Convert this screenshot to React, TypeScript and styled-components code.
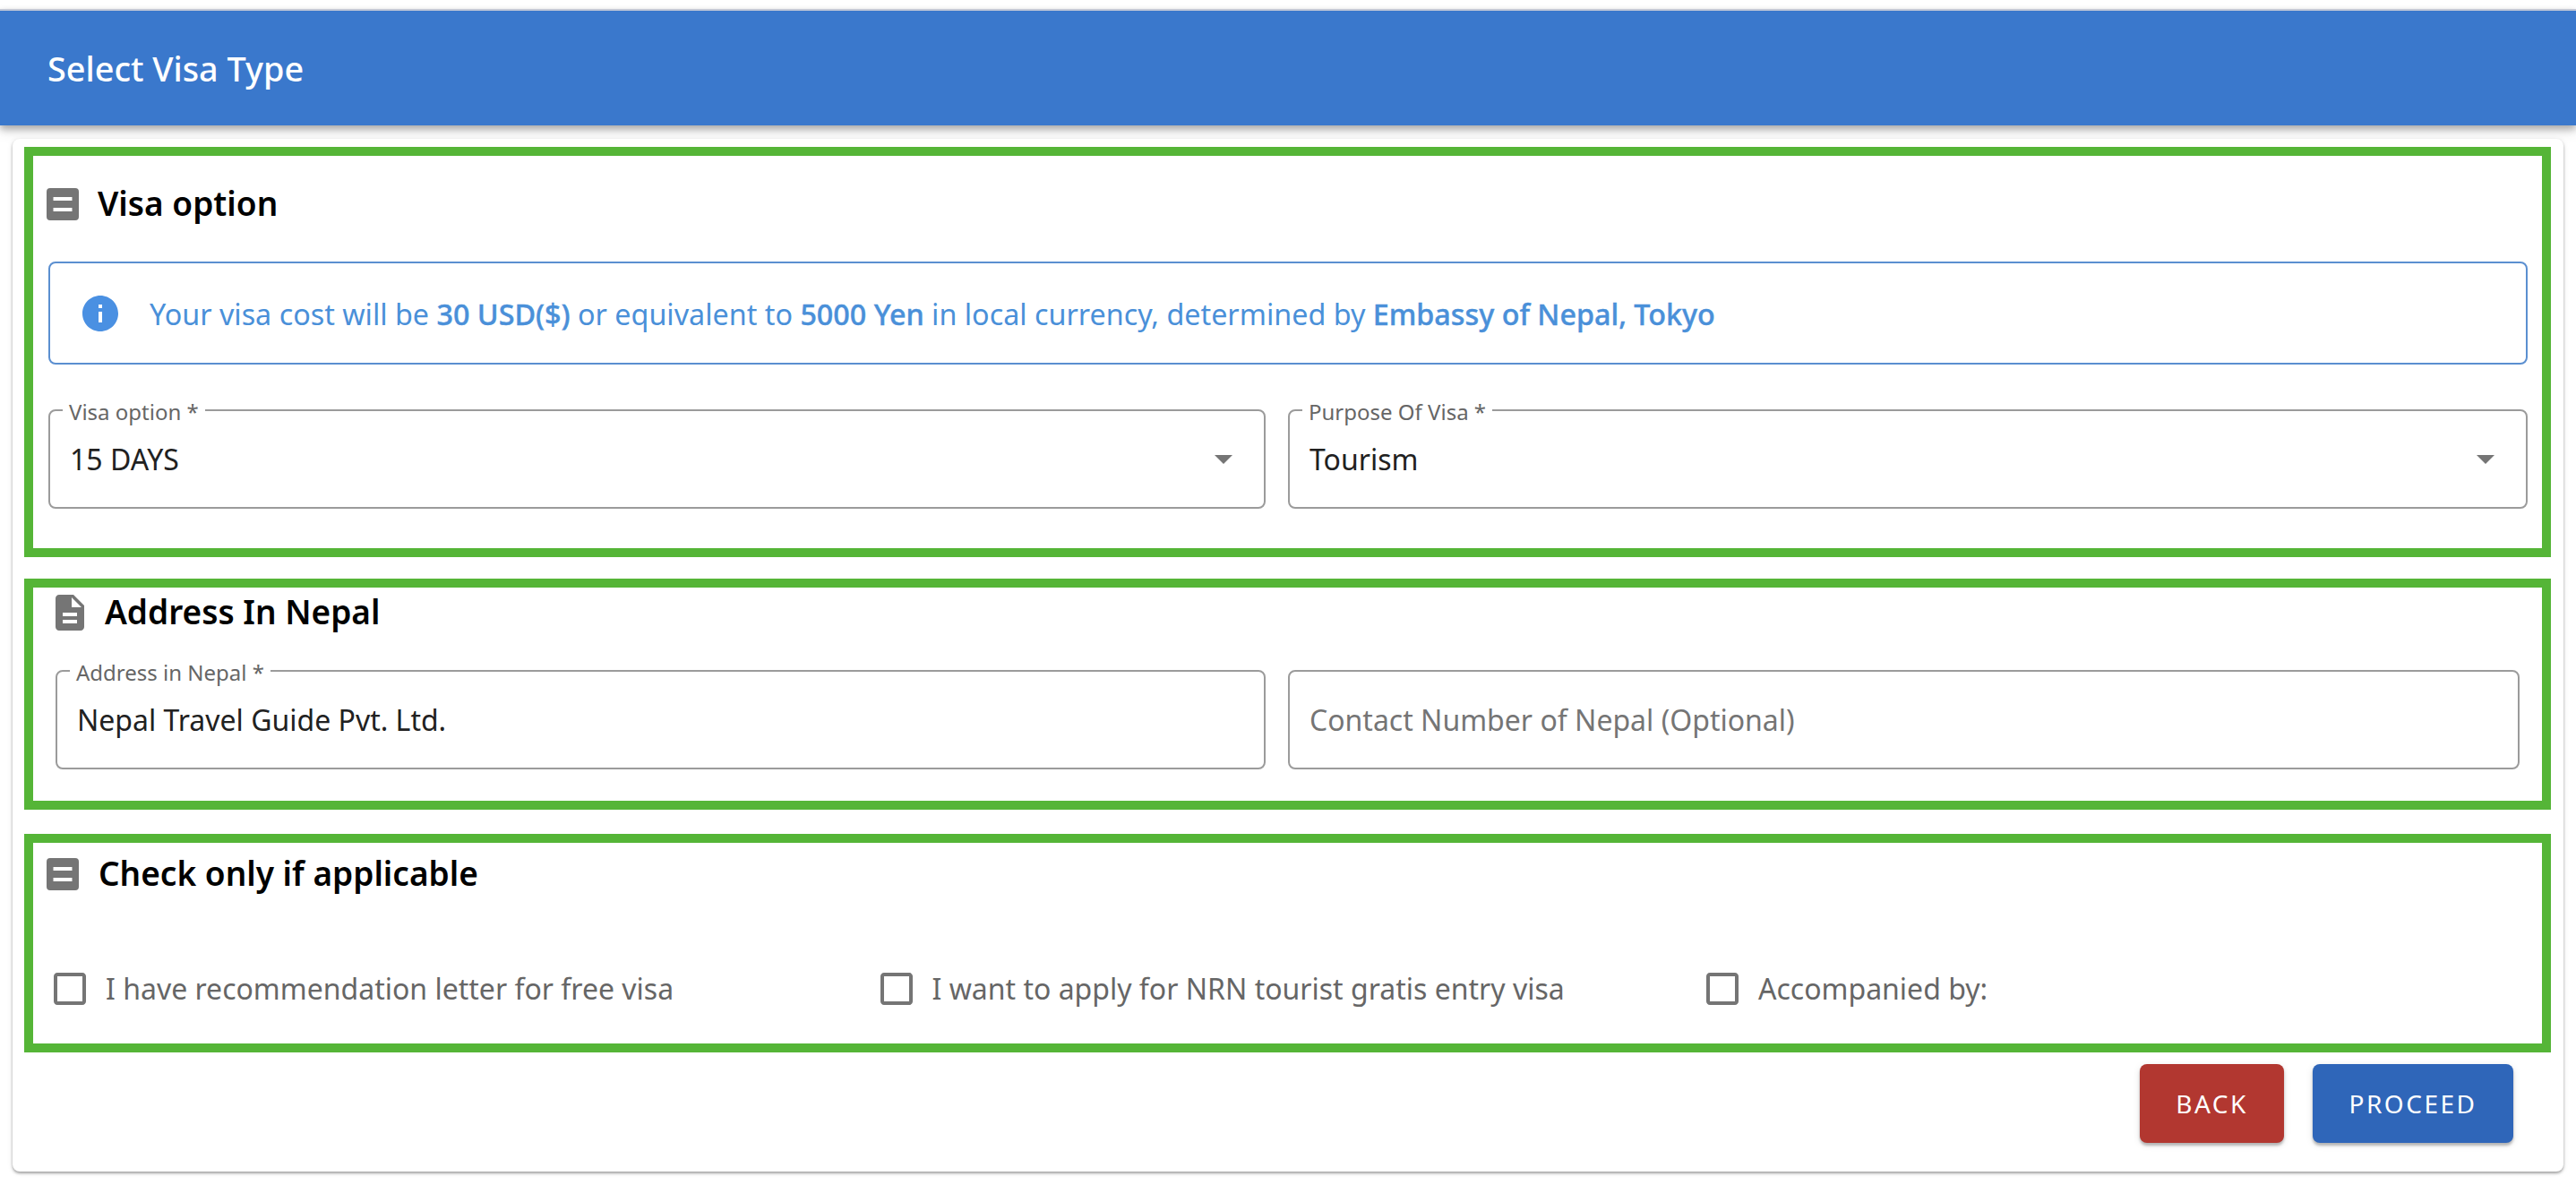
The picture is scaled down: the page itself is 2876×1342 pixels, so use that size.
import React from "react";
import styled, { createGlobalStyle } from "styled-components";

const GlobalStyle = createGlobalStyle`
  html, body {
    margin: 0;
    padding: 0;
    background: #fff;
    font-family: "Noto Sans", "Open Sans", sans-serif;
  }
`;

const Page = styled.div`
  width: 2876px;
  height: 1342px;
  padding-top: 10px;
  box-sizing: border-box;
  overflow: hidden;
`;

const Header = styled.header`
  height: 130px;
  box-sizing: border-box;
  border-top: 2px solid #c4c9d6;
  padding-left: 53px;
  display: flex;
  align-items: center;
  background: #3a78cc;
  color: #fff;
  font-size: 37.8px;
  font-weight: 500;
  box-shadow: 0 4px 8px rgba(0, 0, 0, 0.3), 0 8px 14px rgba(0, 0, 0, 0.08);
`;

const Card = styled.main`
  margin: 15px 14px 0;
  padding: 9px 14px 32px 13px;
  border-radius: 8px;
  background: #fff;
  box-shadow: 0 2px 3px rgba(0, 0, 0, 0.32), 0 1px 6px rgba(0, 0, 0, 0.1);
`;

const Section = styled.section<{ $height: number; $top: number; $gap?: number }>`
  height: ${(p) => p.$height}px;
  box-sizing: border-box;
  border: 10px solid #55b537;
  padding-top: ${(p) => p.$top}px;
  margin-bottom: ${(p) => p.$gap ?? 0}px;
`;

const Heading = styled.div<{ $left: number; $gap: number; $height: number }>`
  display: flex;
  align-items: center;
  height: ${(p) => p.$height}px;
  padding-left: ${(p) => p.$left}px;
  gap: ${(p) => p.$gap}px;
`;

const HeadingText = styled.h2`
  margin: -4px 0 0;
  font-size: 37px;
  font-weight: 600;
  color: #000;
  line-height: 1;
`;

const Alert = styled.div`
  height: 115px;
  box-sizing: border-box;
  margin: 46px 16px 50px 17px;
  padding-left: 36px;
  display: flex;
  align-items: center;
  gap: 35px;
  border: 2px solid #5b8fd0;
  border-radius: 8px;
  color: #4a90d9;
  font-size: 32.3px;

  b {
    font-weight: 500;
    -webkit-text-stroke: 0.4px #4a90d9;
  }
`;

const FieldRow = styled.div<{ $left: number; $side: number; $first: number; $top: number }>`
  display: grid;
  grid-template-columns: ${(p) => p.$first}px 1fr;
  gap: 25px;
  margin: ${(p) => p.$top}px ${(p) => p.$side}px 0 ${(p) => p.$left}px;
`;

const Outlined = styled.fieldset`
  height: 111px;
  min-width: 0;
  box-sizing: border-box;
  margin: 0;
  padding: 0 21px 0 22px;
  border: 2px solid #9b9b9b;
  border-radius: 8px;
`;

// the legend is as thin as the border, so the text sits on the line
const Legend = styled.legend`
  height: 2px;
  margin-left: -8px;
  padding: 0 7px;
  font-size: 24px;
  line-height: 6px;
  color: #666;
`;

const ValueRow = styled.div`
  display: flex;
  align-items: center;
  justify-content: space-between;
  height: 48px;
  margin-top: 29px;
`;

const Value = styled.span<{ $muted?: boolean }>`
  font-size: 32px;
  color: ${(p) => (p.$muted ? "#757575" : "#212121")};
`;

const IconSvg = styled.svg<{ $color: string }>`
  display: block;
  flex: none;
  fill: ${(p) => p.$color};
`;

const CheckRow = styled.div`
  display: grid;
  grid-template-columns: repeat(3, 922.5px);
  margin: 88px 0 0 23px;
`;

const CheckItem = styled.label`
  display: flex;
  align-items: center;
  gap: 22px;
  font-size: 32px;
  color: #666;
`;

const Actions = styled.div`
  display: flex;
  justify-content: flex-end;
  gap: 32px;
  margin-top: 13px;
  padding-right: 42px;
`;

const ActionButton = styled.button<{ $bg: string; $width: number }>`
  width: ${(p) => p.$width}px;
  height: 88px;
  border: 0;
  border-radius: 8px;
  background: ${(p) => p.$bg};
  color: #fff;
  font-family: inherit;
  font-size: 28px;
  letter-spacing: 2.5px;
  box-shadow: 0 3px 3px rgba(0, 0, 0, 0.25), 0 2px 8px rgba(0, 0, 0, 0.1);
`;

const BarsIcon = () => (
  <IconSvg $color="#757575" width="36" height="36" viewBox="0 0 36 36">
    <path d="M4 0h28a4 4 0 0 1 4 4v28a4 4 0 0 1-4 4H4a4 4 0 0 1-4-4V4a4 4 0 0 1 4-4zm3.5 10v4h21v-4zm0 12v4h21v-4z" fillRule="evenodd" />
  </IconSvg>
);

const FileIcon = () => (
  <IconSvg $color="#757575" width="32" height="40" viewBox="4 2 16 20">
    <path d="M14 2H6c-1.1 0-2 .9-2 2v16c0 1.1.89 2 2 2h12c1.1 0 2-.9 2-2V8l-6-6zm2 16H8v-2h8v2zm0-4H8v-2h8v2zm-3-5V3.5L18.5 9H13z" />
  </IconSvg>
);

const InfoIcon = () => (
  <IconSvg $color="#4a90e2" width="40" height="40" viewBox="2 2 20 20">
    <path d="M12 2C6.48 2 2 6.48 2 12s4.48 10 10 10 10-4.48 10-10S17.52 2 12 2zm1 15h-2v-6h2v6zm0-8h-2V7h2v2z" />
  </IconSvg>
);

const ArrowIcon = () => (
  <IconSvg $color="#757575" width="48" height="48" viewBox="0 0 24 24">
    <path d="M7 10l5 5 5-5z" />
  </IconSvg>
);

const CheckIcon = () => (
  <IconSvg $color="#757575" width="36" height="36" viewBox="3 3 18 18">
    <path d="M19 5v14H5V5h14m0-2H5c-1.1 0-2 .9-2 2v14c0 1.1.9 2 2 2h14c1.1 0 2-.9 2-2V5c0-1.1-.9-2-2-2z" />
  </IconSvg>
);

const checks = [
  "I have recommendation letter for free visa",
  "I want to apply for NRN tourist gratis entry visa",
  "Accompanied by:",
];

export default function App() {
  return (
    <Page>
      <GlobalStyle />
      <Header>Select Visa Type</Header>
      <Card>
        <Section $height={458} $top={36} $gap={24}>
          <Heading $left={15} $gap={21} $height={36}>
            <BarsIcon />
            <HeadingText>Visa option</HeadingText>
          </Heading>
          <Alert>
            <InfoIcon />
            <span>
              Your visa cost will be <b>30 USD($)</b> or equivalent to <b>5000 Yen</b> in local
              currency, determined by <b>Embassy of Nepal, Tokyo</b>
            </span>
          </Alert>
          <FieldRow $left={17} $side={16} $first={1359} $top={0}>
            <Outlined>
              <Legend>Visa option *</Legend>
              <ValueRow>
                <Value>15 DAYS</Value>
                <ArrowIcon />
              </ValueRow>
            </Outlined>
            <Outlined>
              <Legend>Purpose Of Visa *</Legend>
              <ValueRow>
                <Value>Tourism</Value>
                <ArrowIcon />
              </ValueRow>
            </Outlined>
          </FieldRow>
        </Section>

        <Section $height={258} $top={8} $gap={27}>
          <Heading $left={25} $gap={23} $height={40}>
            <FileIcon />
            <HeadingText>Address In Nepal</HeadingText>
          </Heading>
          <FieldRow $left={25} $side={25} $first={1351} $top={44}>
            <Outlined>
              <Legend>Address in Nepal *</Legend>
              <ValueRow>
                <Value>Nepal Travel Guide Pvt. Ltd.</Value>
              </ValueRow>
            </Outlined>
            <Outlined>
              <ValueRow>
                <Value $muted>Contact Number of Nepal (Optional)</Value>
              </ValueRow>
            </Outlined>
          </FieldRow>
        </Section>

        <Section $height={244} $top={17}>
          <Heading $left={15} $gap={22} $height={36}>
            <BarsIcon />
            <HeadingText>Check only if applicable</HeadingText>
          </Heading>
          <CheckRow>
            {checks.map((text) => (
              <CheckItem key={text}>
                <CheckIcon />
                {text}
              </CheckItem>
            ))}
          </CheckRow>
        </Section>

        <Actions>
          <ActionButton $bg="#b23730" $width={161}>BACK</ActionButton>
          <ActionButton $bg="#2f66b9" $width={224}>PROCEED</ActionButton>
        </Actions>
      </Card>
    </Page>
  );
}
